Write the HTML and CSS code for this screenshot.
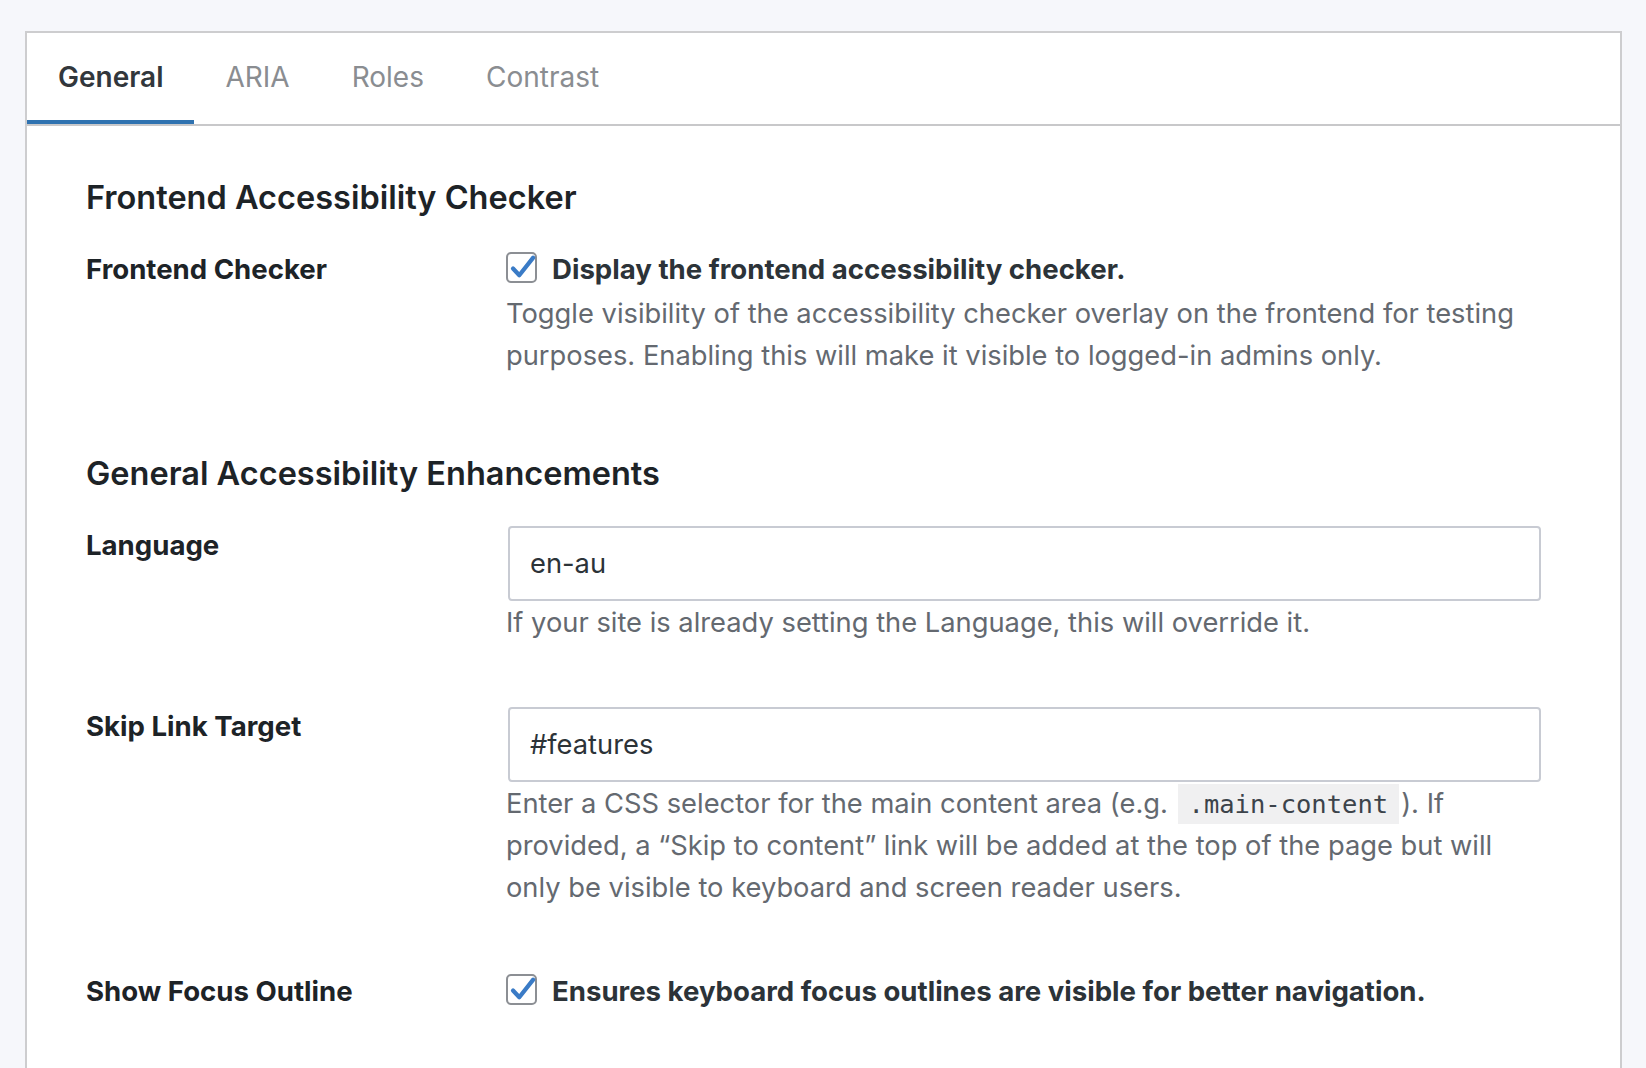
FILE: index.html
```html
<!DOCTYPE html>
<html lang="en">
<head>
<meta charset="utf-8">
<title>Accessibility Settings</title>
<link rel="stylesheet" href="styles.css">
</head>
<body>
<div class="page">
  <div class="panel">
    <nav class="tabs">
      <a class="tab tab-active">General</a>
      <a class="tab">ARIA</a>
      <a class="tab">Roles</a>
      <a class="tab">Contrast</a>
    </nav>
    <div class="content">
      <h2 class="section-title section-first">Frontend Accessibility Checker</h2>
      <div class="row row-checker">
        <div class="label">Frontend Checker</div>
        <div class="field">
          <label class="check-line">
            <span class="checkbox"><svg viewBox="0 0 27 27" width="27" height="27"><path d="M5 14.5 L11.3 21.3 L25.2 3.6" fill="none" stroke="#3a7bc6" stroke-width="4.2" stroke-linecap="round" stroke-linejoin="round"/></svg></span>
            <span class="check-text">Display the frontend accessibility checker.</span>
          </label>
          <p class="help help-after-check">Toggle visibility of the accessibility checker overlay on the frontend for testing purposes. Enabling this will make it visible to logged-in admins only.</p>
        </div>
      </div>

      <h2 class="section-title">General Accessibility Enhancements</h2>
      <div class="row row-language">
        <div class="label">Language</div>
        <div class="field">
          <div class="input">en-au</div>
          <p class="help">If your site is already setting the Language, this will override it.</p>
        </div>
      </div>
      <div class="row row-skip">
        <div class="label">Skip Link Target</div>
        <div class="field">
          <div class="input">#features</div>
          <p class="help">Enter a CSS selector for the main content area (e.g. <code>.main-content</code>). If provided, a “Skip to content” link will be added at the top of the page but will only be visible to keyboard and screen reader users.</p>
        </div>
      </div>
      <div class="row row-focus">
        <div class="label">Show Focus Outline</div>
        <div class="field">
          <label class="check-line">
            <span class="checkbox"><svg viewBox="0 0 27 27" width="27" height="27"><path d="M5 14.5 L11.3 21.3 L25.2 3.6" fill="none" stroke="#3a7bc6" stroke-width="4.2" stroke-linecap="round" stroke-linejoin="round"/></svg></span>
            <span class="check-text">Ensures keyboard focus outlines are visible for better navigation.</span>
          </label>
        </div>
      </div>
    </div>
  </div>
</div>
</body>
</html>
```

FILE: styles.css
```css
html, body {
  margin: 0;
  padding: 0;
  background: #f6f7fb;
  font-family: Inter, "Noto Sans", "Liberation Sans", sans-serif;
  color: #1d2327;
}

.page {
  padding: 31px 24px 0 25px;
  height: 1037px;
  overflow: hidden;
}

.panel {
  background: #ffffff;
  border: 2px solid #cdcdcf;
  border-bottom: none;
  min-height: 1100px;
}

.tabs {
  display: flex;
  border-bottom: 2px solid #c8c8ca;
}

.tab {
  padding: 28px 31px 27px;
  font-size: 28px;
  line-height: 32px;
  color: #8a8d91;
  border-bottom: 4px solid transparent;
}

.tab-active {
  color: #32373c;
  font-weight: 600;
  border-bottom-color: #2f72b0;
}

.content {
  padding: 0 79px 0 59px;
}

.section-title {
  margin: 77px 0 30px;
  font-size: 32.5px;
  line-height: 40px;
  font-weight: 600;
  color: #1d2327;
}

.section-first {
  margin-top: 52px;
}

.row {
  display: grid;
  grid-template-columns: 420px 1fr;
}

.row-language {
  margin-bottom: 61px;
}

.row-skip {
  margin-bottom: 61px;
}

.label {
  font-size: 27.6px;
  line-height: 42px;
  font-weight: 700;
  color: #1d2327;
}

.field {
  font-size: 27.3px;
  line-height: 42px;
}

.check-line {
  display: flex;
  align-items: center;
  gap: 15px;
  height: 42px;
}

.checkbox {
  box-sizing: border-box;
  width: 31px;
  height: 31px;
  margin-bottom: 4px;
  border: 2px solid #8c8f94;
  border-radius: 5px;
  background: #fff;
  flex: none;
  display: flex;
  overflow: visible;
}

.checkbox svg {
  overflow: visible;
}

.check-text {
  font-size: 27.6px;
  font-weight: 700;
  color: #2c3338;
}

.help {
  margin: 1px 0 0;
  color: #646970;
}

.help-after-check {
  margin-top: 3px;
}

.input {
  box-sizing: border-box;
  margin: 2px 0 0 2px;
  height: 75px;
  border: 2px solid #c8cbd3;
  border-radius: 4px;
  padding: 0 20px;
  display: flex;
  align-items: center;
  color: #2c3338;
}

code {
  font-family: "DejaVu Sans Mono", "Liberation Mono", monospace;
  font-size: 25.5px;
  background: #f0f0f1;
  color: #3c434a;
  padding: 5px 11px;
  margin: 0 2px;
}
```
